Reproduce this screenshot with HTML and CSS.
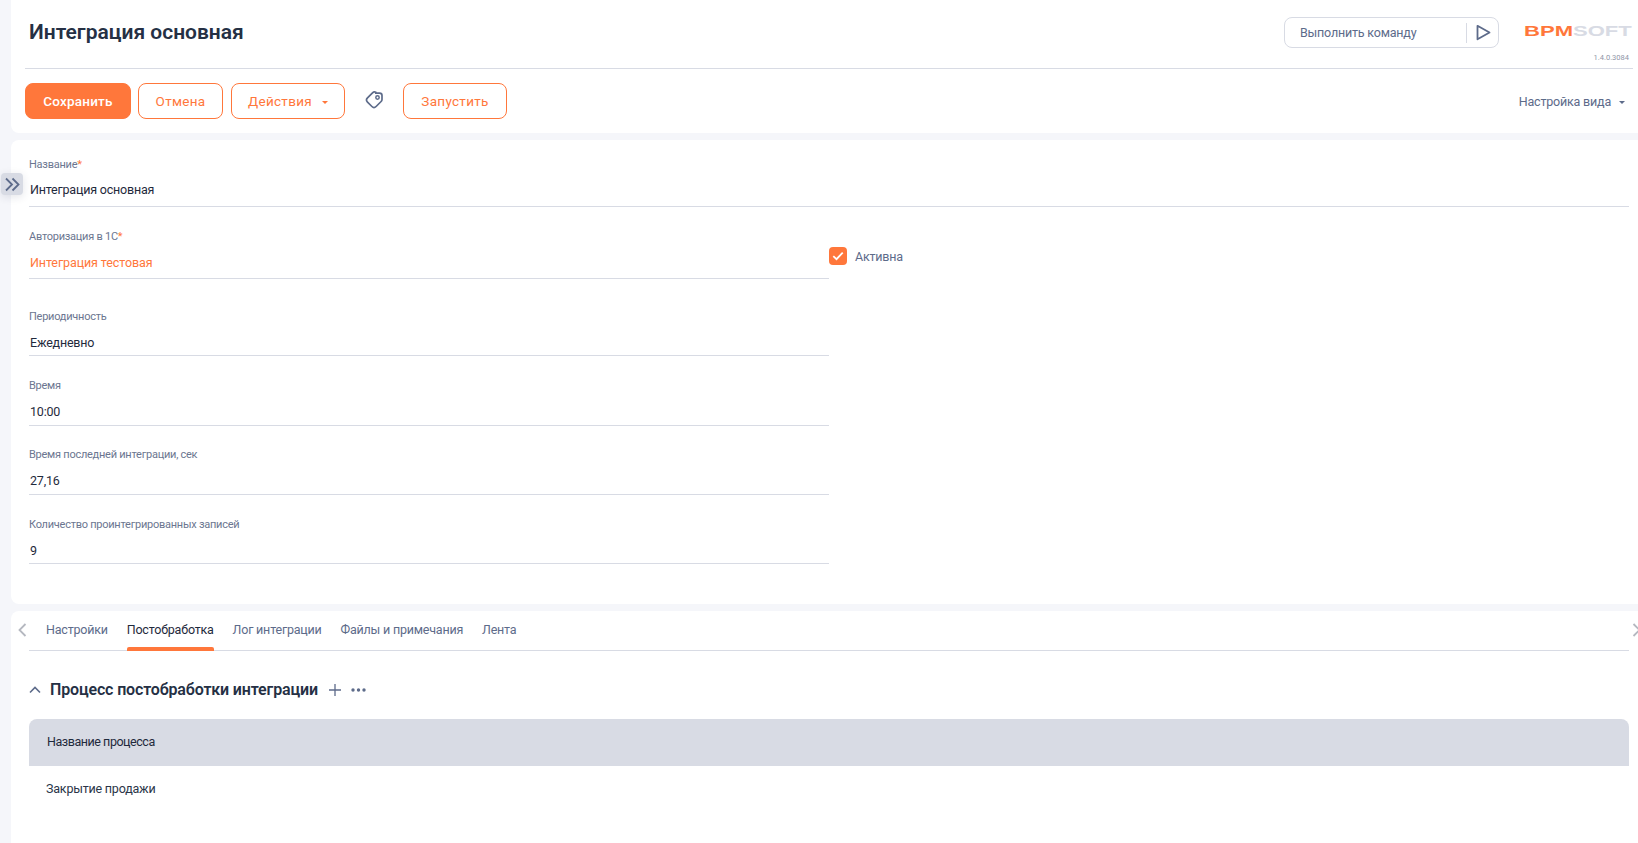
FILE: index.html
```html
<!DOCTYPE html>
<html lang="ru">
<head>
<meta charset="utf-8">
<title>Интеграция основная</title>
<link rel="stylesheet" href="styles.css">
</head>
<body>
<div class="page">
  <section class="card head-card">
    <header class="topbar">
      <h1 class="title">Интеграция основная</h1>
      <div class="top-right">
        <div class="command">
          <span class="command-text">Выполнить команду</span>
          <span class="command-btn">
            <svg width="15" height="17" viewBox="0 0 15 17"><path d="M1.500 1.800 13.500 8.500 1.500 15.200Z" fill="none" stroke="#5d6b8a" stroke-width="1.800" stroke-linejoin="round"/></svg>
          </span>
        </div>
        <div class="brand">
          <div class="logo"><span class="logo-a">BPM</span><span class="logo-b">SOFT</span></div>
          <div class="version">1.4.0.3084</div>
        </div>
      </div>
    </header>
    <div class="toolbar">
      <button class="btn btn-primary btn-save">Сохранить</button>
      <button class="btn btn-cancel">Отмена</button>
      <button class="btn btn-actions">Действия<span class="caret caret-orange"></span></button>
      <span class="tag-icon">
        <svg width="20" height="20" viewBox="0 0 20 20"><path d="M11.800 2.200h3.800a2.400 2.400 0 0 1 2.400 2.400v3.800a3 3 0 0 1-.9 2.100l-5 5a3 3 0 0 1-4.200 0l-4.400-4.400a3 3 0 0 1 0-4.200l5-5a3 3 0 0 1 3.300-.7Z" fill="none" stroke="#5d6b8a" stroke-width="1.700"/><circle cx="13.500" cy="6.500" r="1.700" fill="none" stroke="#5d6b8a" stroke-width="1.500"/></svg>
      </span>
      <button class="btn btn-run">Запустить</button>
      <div class="view-settings">Настройка вида<span class="caret caret-grey"></span></div>
    </div>
  </section>

  <section class="card form-card">
    <button class="collapse-toggle" aria-label="Развернуть">
      <svg width="17" height="15" viewBox="0 0 17 15"><path d="M2 1.500 8 7.500 2 13.500M8.500 1.500 14.500 7.500 8.500 13.500" fill="none" stroke="#5d6b8a" stroke-width="1.800"/></svg>
    </button>
    <div class="field field-full f-name">
      <div class="label">Название<span class="req">*</span></div>
      <div class="value">Интеграция основная</div>
    </div>
    <div class="form-row">
      <div class="form-col">
        <div class="field f-auth">
          <div class="label">Авторизация в 1С<span class="req">*</span></div>
          <div class="value value-link">Интеграция тестовая</div>
        </div>
        <div class="field f-period">
          <div class="label">Периодичность</div>
          <div class="value">Ежедневно</div>
        </div>
        <div class="field f-std">
          <div class="label">Время</div>
          <div class="value">10:00</div>
        </div>
        <div class="field f-std">
          <div class="label">Время последней интеграции, сек</div>
          <div class="value">27,16</div>
        </div>
        <div class="field f-std">
          <div class="label">Количество проинтегрированных записей</div>
          <div class="value">9</div>
        </div>
      </div>
      <label class="check">
        <span class="check-box">
          <svg width="12" height="10" viewBox="0 0 12 10"><path d="M1.300 5.200 4.500 8.200 10.700 1.600" fill="none" stroke="#fff" stroke-width="1.800"/></svg>
        </span>
        <span class="check-label">Активна</span>
      </label>
    </div>
  </section>

  <section class="card tabs-card">
    <nav class="tabs">
      <span class="tab-arrow tab-arrow-left"><svg width="9" height="14" viewBox="0 0 9 14"><path d="M7.500 1 1.500 7 7.500 13" fill="none" stroke="#b5b8c0" stroke-width="1.800"/></svg></span>
      <span class="tab">Настройки</span>
      <span class="tab tab-active">Постобработка</span>
      <span class="tab">Лог интеграции</span>
      <span class="tab">Файлы и примечания</span>
      <span class="tab">Лента</span>
      <span class="tab-arrow tab-arrow-right"><svg width="9" height="14" viewBox="0 0 9 14"><path d="M1.500 1 7.500 7 1.500 13" fill="none" stroke="#b5b8c0" stroke-width="1.800"/></svg></span>
    </nav>
    <div class="section-head">
      <svg class="chev" width="12" height="8" viewBox="0 0 12 8"><path d="M1 6.500 6 1.500 11 6.500" fill="none" stroke="#5d6b8a" stroke-width="1.600"/></svg>
      <h2 class="section-title">Процесс постобработки интеграции</h2>
      <svg class="plus" width="12" height="12" viewBox="0 0 12 12"><path d="M6 0V12M0 6H12" stroke="#5d6b8a" stroke-width="1.300"/></svg>
      <svg class="dots" width="15" height="4" viewBox="0 0 15 4"><circle cx="2" cy="2" r="1.700" fill="#5d6b8a"/><circle cx="7.500" cy="2" r="1.700" fill="#5d6b8a"/><circle cx="13" cy="2" r="1.700" fill="#5d6b8a"/></svg>
    </div>
    <div class="table">
      <div class="table-head">Название процесса</div>
      <div class="table-row">Закрытие продажи</div>
    </div>
  </section>
</div>
</body>
</html>
```
FILE: styles.css
```css
* { box-sizing: border-box; }
html, body { margin: 0; padding: 0; height: 100%; overflow: hidden; }
body {
  background: #f5f6fa;
  color: #1f2a3c;
  font-family: Roboto, "Liberation Sans", sans-serif;
  font-size: 12.5px;
  letter-spacing: -.2px;
}
.page {
  display: flex;
  flex-direction: column;
  gap: 7px;
  height: 843px;
  padding-left: 11px;
}
.card { background: #fff; position: relative; }

/* header card */
.head-card { height: 133px; padding: 0 5px 0 14px; border-radius: 0 0 0 8px; }
.topbar {
  height: 69px;
  border-bottom: 1px solid #d8dbe4;
  display: flex;
  justify-content: space-between;
  padding-left: 4px;
}
.title { margin: 17px 0 0; font-size: 21px; line-height: 30px; font-weight: 600; letter-spacing: 0; color: #253044; }
.top-right { display: flex; }
.command {
  width: 215px;
  height: 31px;
  margin-top: 17px;
  border: 1px solid #d8dbe4;
  border-radius: 8px;
  display: flex;
  align-items: center;
  justify-content: space-between;
  padding-left: 15px;
}
.command-text { color: #5d6b8a; }
.command-btn {
  width: 32px;
  height: 20px;
  border-left: 1px solid #d8dbe4;
  display: flex;
  align-items: center;
  justify-content: center;
  padding-left: 2px;
}
.brand { width: 109px; margin-left: 25px; }
.logo {
  margin-top: 22px;
  height: 18px;
  line-height: 18px;
  font-family: "Liberation Sans", sans-serif;
  font-weight: 700;
  font-size: 15px;
  letter-spacing: 0;
  white-space: nowrap;
  transform: scaleX(1.47);
  transform-origin: left center;
}
.logo-a { color: #ff773b; }
.logo-b { color: #d8dbe4; }
.version { margin-top: 13px; padding-right: 4px; font-size: 7.5px; line-height: 10px; letter-spacing: 0; text-align: right; color: #8f96a8; }

.toolbar { display: flex; align-items: center; padding-top: 14px; height: 50px; }
.btn {
  height: 36px;
  border-radius: 8px;
  border: 1px solid #ff773b;
  background: #fff;
  color: #ff773b;
  font: 400 13.5px Roboto, "Liberation Sans", sans-serif;
  letter-spacing: .3px;
  padding: 0;
}
.btn-primary { background: #ff773b; color: #fff; font-weight: 500; letter-spacing: .2px; }
.btn-save { width: 106px; }
.btn-cancel { width: 85px; margin-left: 7px; }
.btn-actions { width: 114px; margin-left: 8px; }
.btn-run { width: 104px; margin-left: 19px; }
.caret {
  display: inline-block;
  width: 0; height: 0;
  border-left: 3.500px solid transparent;
  border-right: 3.500px solid transparent;
  margin-left: 10px;
  vertical-align: 2px;
}
.caret-orange { border-top: 3.500px solid #ff773b; }
.caret-grey { border-top: 3.500px solid #5d6b8a; margin-left: 8px; }
.tag-icon { margin-left: 19px; width: 20px; height: 20px; display: block; }
.view-settings { margin-left: auto; margin-right: 8px; color: #5d6b8a; }

/* form card */
.form-card { height: 464px; padding: 0 9px 0 18px; border-radius: 8px 0 0 8px; }
.collapse-toggle {
  position: absolute;
  left: -10px;
  top: 33px;
  width: 22px;
  height: 22px;
  border: 0;
  padding: 0;
  border-radius: 4px;
  background: #d8dbe4;
  box-shadow: 0 2px 8px rgba(30, 40, 70, .12);
  display: flex;
  align-items: center;
  justify-content: center;
}
.field { border-bottom: 1px solid #d8dbe4; width: 800px; }
.field-full { width: 100%; }
.label { font-size: 11px; line-height: 14px; letter-spacing: -.25px; color: #6b7690; }
.req { color: #ff773b; }
.value { line-height: 18px; padding-left: 1px; color: #1f2a3c; }
.value-link { color: #ff773b; letter-spacing: -.1px; }
.f-name { padding-top: 18px; height: 67px; }
.f-name .value { margin-top: 9px; }
.f-auth { margin-top: 23px; height: 49px; }
.f-auth .value { margin-top: 10px; }
.f-period { margin-top: 31px; height: 46px; }
.f-period .value { margin-top: 10px; }
.f-std { margin-top: 22px; height: 47px; }
.f-std .value { margin-top: 10px; }
.f-period + .f-std { margin-top: 23px; }
.f-std:last-child { margin-top: 23px; height: 46px; }
.form-row { display: flex; align-items: flex-start; }
.check { display: flex; align-items: center; margin-top: 40px; }
.check-box {
  width: 18px; height: 18px;
  border-radius: 4px;
  background: #ff773b;
  display: flex;
  align-items: center;
  justify-content: center;
}
.check-label { margin-left: 8px; color: #5d6b8a; }

/* tabs card */
.tabs-card { flex: 1; padding: 0 9px 0 18px; border-radius: 8px 0 0 0; }
.tabs {
  display: flex;
  height: 40px;
  border-bottom: 1px solid #d8dbe4;
  gap: 18.9px;
  padding-left: 17px;
  position: relative;
}
.tab { line-height: 38px; color: #5d6b8a; position: relative; white-space: nowrap; }
.tab-active { color: #1f2a3c; }
.tab-active::after {
  content: "";
  position: absolute;
  left: 0; right: 0; bottom: -1px;
  height: 4px;
  border-radius: 2px 2px 0 0;
  background: #ff773b;
}
.tab-arrow { position: absolute; top: 12px; width: 9px; height: 14px; display: block; }
.tab-arrow-left { left: -11px; }
.tab-arrow-right { right: -12px; }
.section-head { display: flex; align-items: center; height: 24px; margin-top: 27px; }
.section-title { margin: 0 0 0 9px; font-size: 16px; line-height: 24px; font-weight: 600; letter-spacing: -.15px; color: #253044; }
.plus { margin-left: 11px; }
.dots { margin-left: 10px; }
.table { margin-top: 17px; }
.table-head {
  height: 47px;
  line-height: 46px;
  padding-left: 18px;
  background: #d8dbe4;
  border-radius: 8px 8px 0 0;
  letter-spacing: -.45px;
  color: #1f2a3c;
}
.table-row { height: 46px; line-height: 46px; padding-left: 17px; color: #2a3548; }
```
